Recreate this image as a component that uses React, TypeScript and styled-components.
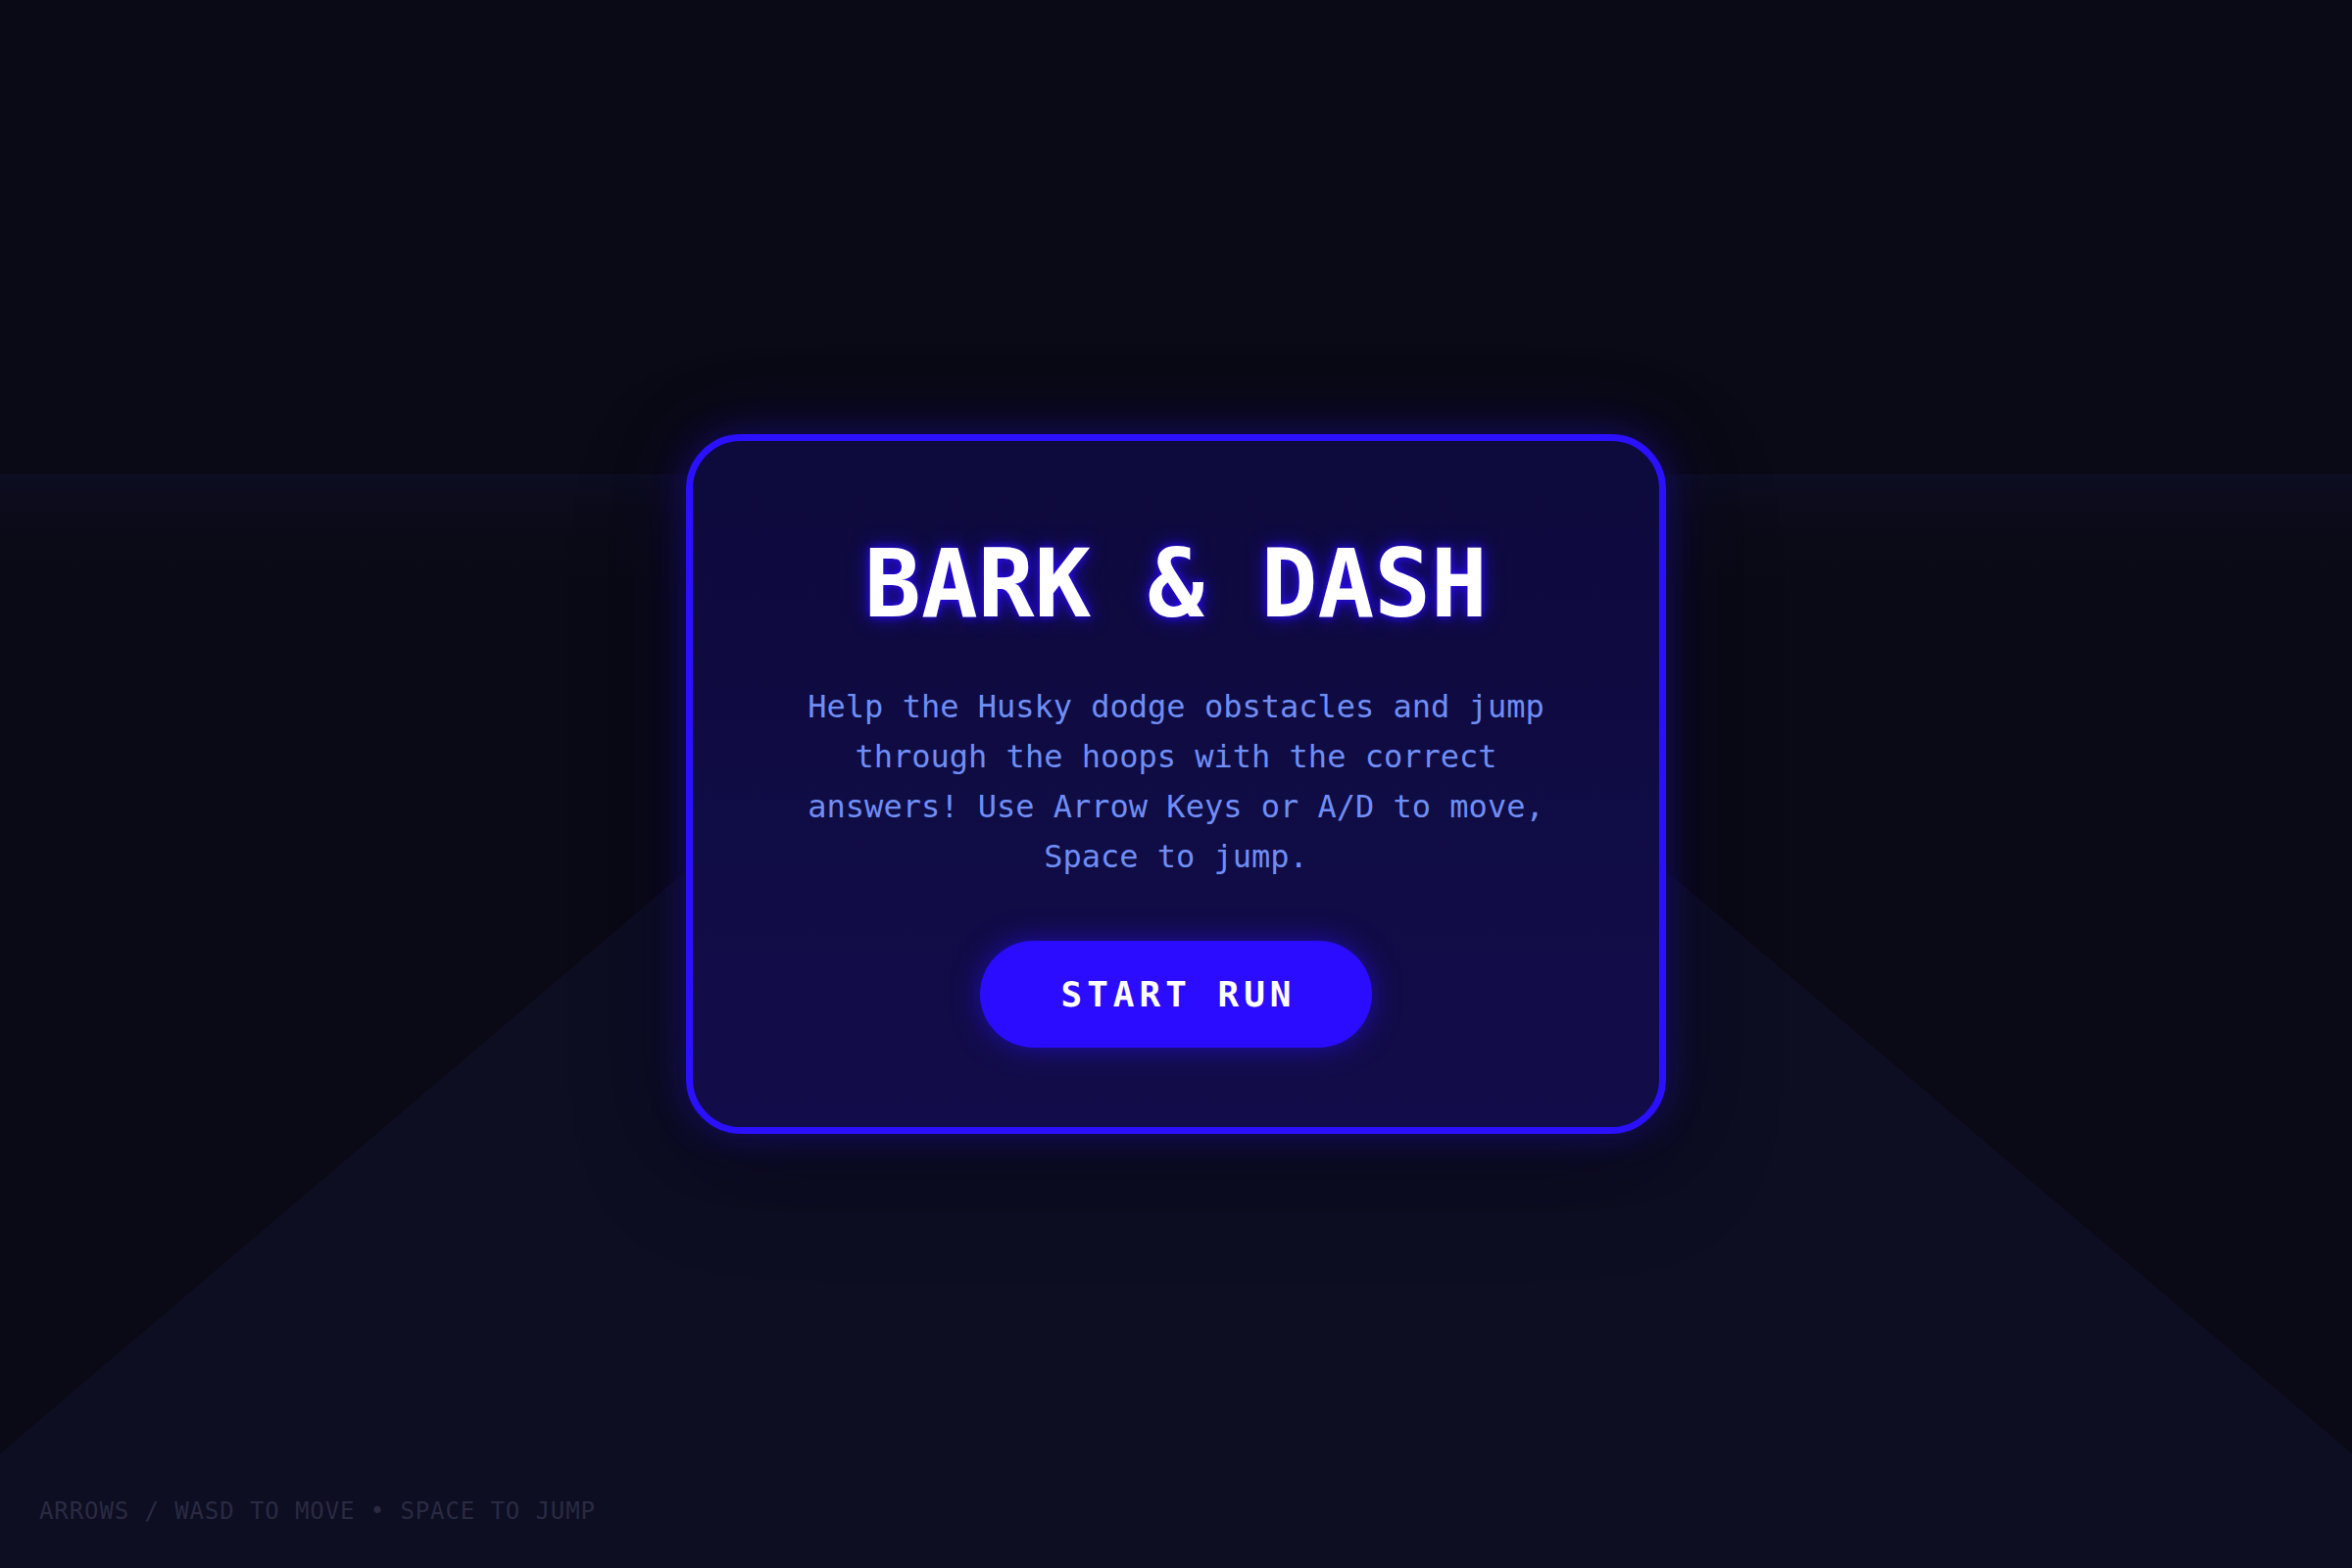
import React from 'react';
import styled, {createGlobalStyle} from "styled-components";

const GlobalStyle = createGlobalStyle`
    html, body {
        margin: 0;
        padding: 0;
        height: 100%;
        background: #0a0a16;
    }
    #root {
        height: 100%;
    }
    * {
        box-sizing: border-box;
    }
`

export default function App() {
    return (
        <>
            <GlobalStyle/>
            <StyledScreen>
                <Horizon/>
                <Floor/>
                <StyledOverlay>
                    <Card>
                        <Title>BARK &amp; DASH</Title>
                        <Description>
                            Help the Husky dodge obstacles and jump through the hoops with the correct
                            answers! Use Arrow Keys or A/D to move, Space to jump.
                        </Description>
                        <StartButton type="button">START RUN</StartButton>
                    </Card>
                </StyledOverlay>
                <ControlsHint>ARROWS / WASD TO MOVE • SPACE TO JUMP</ControlsHint>
            </StyledScreen>
        </>
    );
}

const StyledScreen = styled.main`
    position: relative;
    width: 100vw;
    height: 100vh;
    overflow: hidden;
    background: #0a0a16;
    font-family: "DejaVu Sans Mono", "Liberation Mono", monospace;
`

// faint glow line where the sky meets the road
const Horizon = styled.div`
    position: absolute;
    left: 0;
    right: 0;
    top: 484px;
    height: 120px;
    background: linear-gradient(180deg, rgba(14, 14, 36, 0.85) 0%, rgba(12, 12, 28, 0.5) 35%, rgba(10, 10, 22, 0) 100%);
`

const Floor = styled.div`
    position: absolute;
    inset: 0;
    background: #0d0e22;
    clip-path: polygon(50% 29%, 100% 92.7%, 100% 100%, 0 100%, 0 92.7%);
`

const StyledOverlay = styled.div`
    position: relative;
    z-index: 1;
    height: 100%;
    display: flex;
    align-items: center;
    justify-content: center;
`

const Card = styled.section`
    width: 1000px;
    padding: 98px 100px 81px;
    display: flex;
    flex-direction: column;
    align-items: center;
    border: 7px solid #2b10ff;
    border-radius: 56px;
    background: linear-gradient(180deg, #0d0a3d 0%, #120d4a 100%);
    box-shadow: 0 0 36px rgba(43, 16, 255, 0.3),
                0 0 80px rgba(30, 12, 150, 0.22),
                0 30px 110px rgba(0, 0, 0, 0.38);
`

const Title = styled.h1`
    margin: 0;
    color: #FFF;
    font-size: 96px;
    font-weight: 700;
    line-height: 1;
    white-space: pre;
    text-shadow: 0 0 8px rgba(43, 12, 255, 0.95),
                 0 0 20px rgba(43, 12, 255, 0.7);
`

const Description = styled.p`
    margin: 52px 0 0;
    max-width: 790px;
    color: #6f8ef5;
    font-size: 32px;
    font-weight: 400;
    line-height: 1.6;
    text-align: center;
`

const StartButton = styled.button`
    margin-top: 60px;
    padding: 33px 77px 33px 82px;
    border: none;
    border-radius: 999px;
    background: #2b0cff;
    color: #FFF;
    font-family: inherit;
    font-size: 36px;
    font-weight: 700;
    line-height: 1.2;
    letter-spacing: 5px;
    cursor: pointer;
    box-shadow: 0 0 28px rgba(43, 12, 255, 0.55);
`

const ControlsHint = styled.div`
    position: absolute;
    left: 40px;
    bottom: 46px;
    z-index: 1;
    color: #2a2a42;
    font-size: 24px;
    letter-spacing: 0.9px;
    line-height: 1;
`
